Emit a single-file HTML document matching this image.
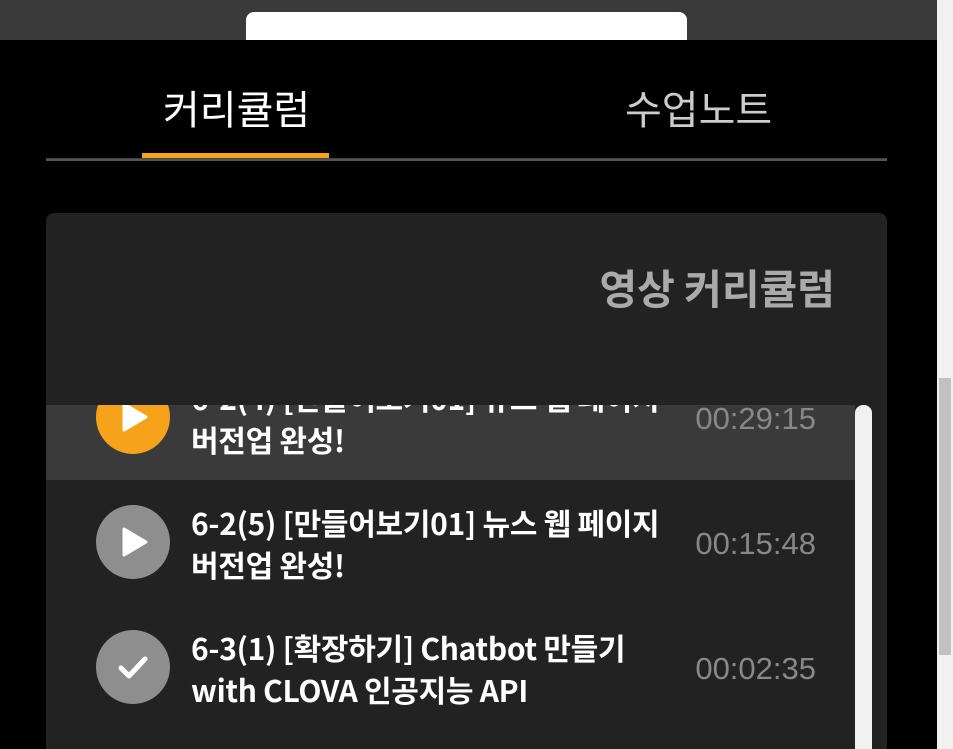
<!DOCTYPE html><html><head><meta charset="utf-8"><style>
*{margin:0;padding:0;box-sizing:border-box}
body{width:953px;height:749px;background:#000;overflow:hidden;position:relative;font-family:"Liberation Sans","Noto Sans CJK KR",sans-serif}
.top{position:absolute;left:0;top:0;width:937px;height:40px;background:#3a3a3a}
.wb{position:absolute;left:246px;top:12px;width:441px;height:28px;background:#fff;border-radius:8px 8px 0 0}
.sb{position:absolute;left:937px;top:0;width:16px;height:749px;background:#f1f1f1}
.th{position:absolute;left:939px;top:378px;width:12px;height:277px;background:#c1c1c1}
.tab{position:absolute;top:82px;font-size:40px;line-height:50px;font-family:"Noto Sans CJK KR",sans-serif}
.ul{position:absolute;left:142px;top:153px;width:187px;height:5px;background:#f7a21b}
.ln{position:absolute;left:46px;top:158px;width:841px;height:3px;background:#555;border-top:1px solid #444}
.panel{position:absolute;left:46px;top:213px;width:841px;height:536px;background:#222;border-radius:8px 8px 0 0;overflow:hidden}
.hd{position:absolute;right:52px;top:48px;font-size:41px;line-height:50px;font-weight:bold;color:#aaa;font-family:"Noto Sans CJK KR",sans-serif}
.list{position:absolute;left:0;top:192px;width:809px;height:344px;overflow:hidden}
.row{position:absolute;left:0;width:809px;height:125px}
.c{position:absolute;left:50px;top:25px;width:74px;height:74px;border-radius:50%;background:#8e8e8e}
.t{position:absolute;left:145px;top:21px;font-size:30px;font-weight:bold;color:#fff;line-height:42px;letter-spacing:-0.3px;font-family:"Noto Sans CJK KR",sans-serif;white-space:nowrap}
.tm{position:absolute;right:39px;top:46px;font-size:31px;line-height:36px;color:#888}
.trk{position:absolute;left:809px;top:192px;width:17px;height:400px;background:#f1f1f1;border-radius:8px}
</style></head><body>
<div class="top"></div><div class="wb"></div>
<div class="sb"></div><div class="th"></div>
<div class="tab" style="left:163px;color:#fff">커리큘럼</div>
<div class="tab" style="left:625px;color:#ccc">수업노트</div>
<div class="ln"></div><div class="ul"></div>
<div class="panel">
<div class="hd">영상 커리큘럼</div>
<div class="list">
<div class="row" style="top:-50px;background:#3a3a3a"><div class="c" style="background:#f7a21b"><svg width="74" height="74"><path d="M28 24 L50 37 L28 50Z" fill="#fff" stroke="#fff" stroke-width="3" stroke-linejoin="round"/></svg></div><div class="t">6-2(4) [만들어보기01] 뉴스 웹 페이지<br>버전업 완성!</div><div class="tm">00:29:15</div></div>
<div class="row" style="top:75px"><div class="c"><svg width="74" height="74"><path d="M28 24 L50 37 L28 50Z" fill="#fff" stroke="#fff" stroke-width="3" stroke-linejoin="round"/></svg></div><div class="t">6-2(5) [만들어보기01] 뉴스 웹 페이지<br>버전업 완성!</div><div class="tm">00:15:48</div></div>
<div class="row" style="top:200px"><div class="c"><svg width="74" height="74"><path d="M25 38 L33 46 L49 29" fill="none" stroke="#fff" stroke-width="5" stroke-linecap="round" stroke-linejoin="round"/></svg></div><div class="t">6-3(1) [확장하기] Chatbot 만들기<br>with CLOVA 인공지능 API</div><div class="tm">00:02:35</div></div>
</div>
<div class="trk"></div>
</div>
</body></html>
